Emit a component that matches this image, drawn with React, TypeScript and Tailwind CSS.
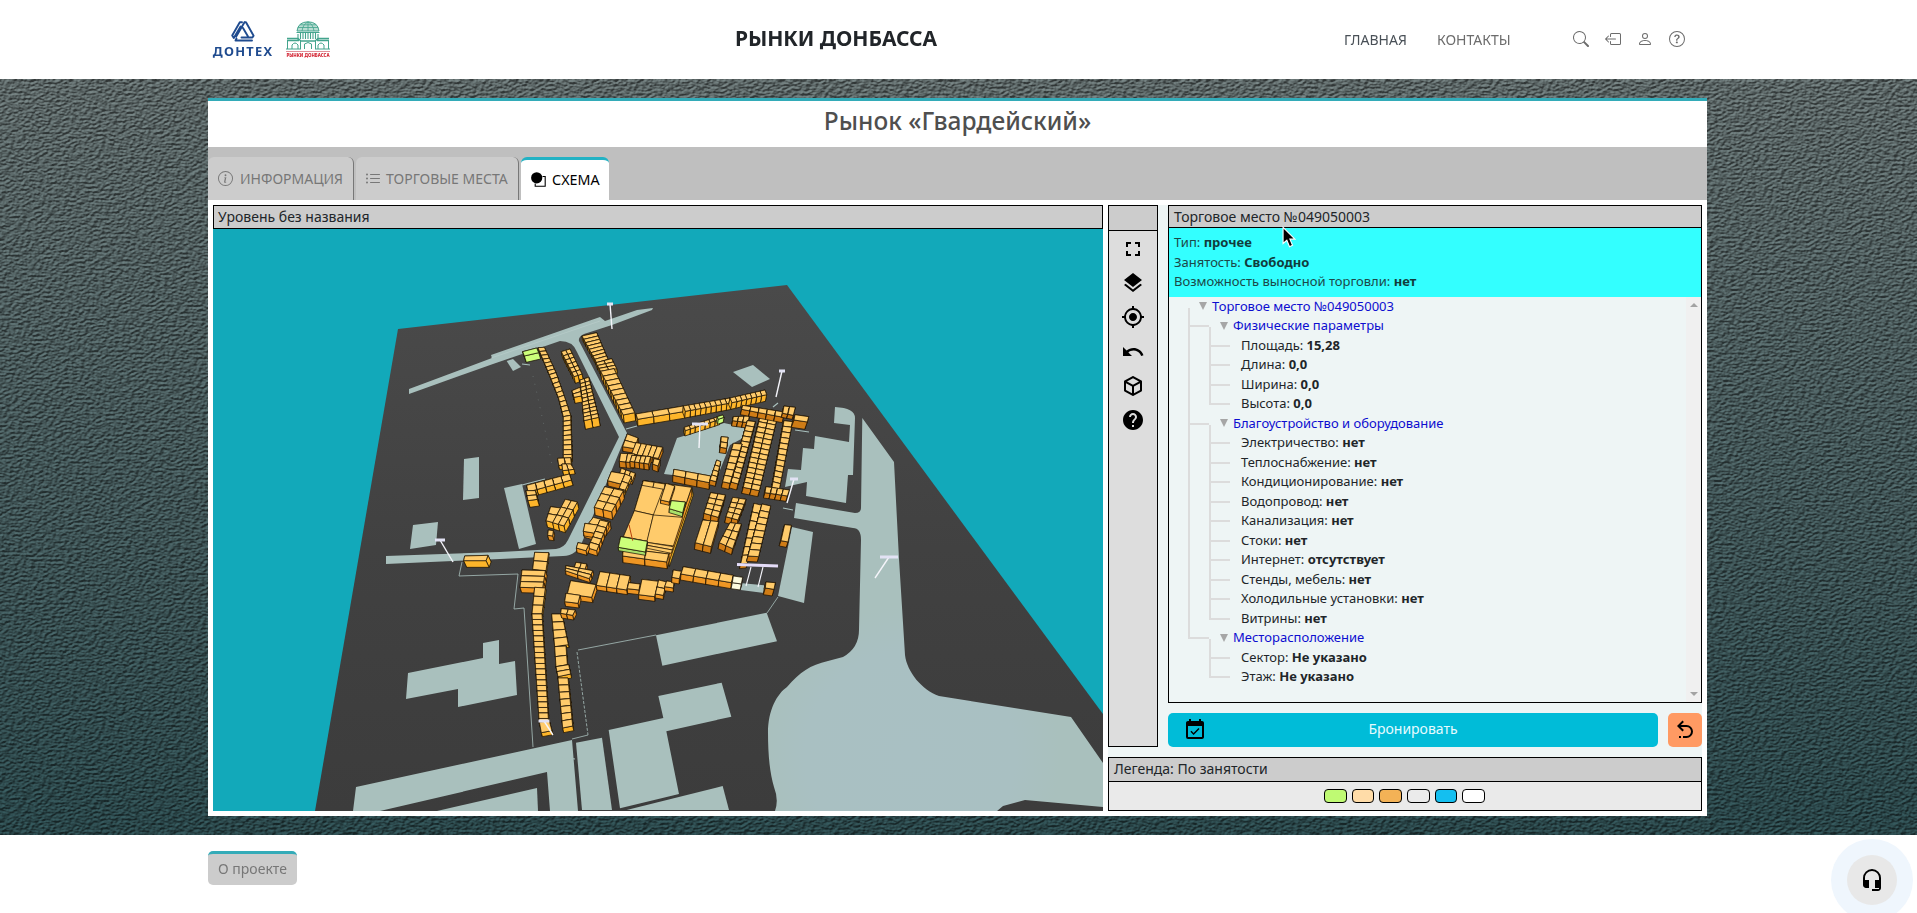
import React from "react";
import { BsSearch, BsBoxArrowLeft, BsPerson, BsQuestionCircle, BsInfoCircle, BsListUl } from "react-icons/bs";
import { MdFullscreen, MdLayers, MdMyLocation, MdUndo, MdHelp, MdEventAvailable, MdHeadsetMic } from "react-icons/md";

type Block = {
  q: number[];
  n?: number;
  m?: number;
  h?: number;
  side?: string;
  top?: string;
};

const BRIGHT = "#fdb52a";
const MID = "#ee9624";
const DARK = "#cf7c16";

/* Upper part of the market. Quads run start-left, end-left, end-right, start-right. */
const upper: Block[] = [
  { q: [68, 155, 73, 168, 116, 158, 110, 144], h: 19, side: "#ccff7a", top: "#ccff7a" },
  { q: [114, 143, 148, 224, 168, 218, 133, 142], n: 7, h: 6 },
  { q: [148, 224, 175, 292, 192, 286, 168, 218], n: 5, h: 6 },
  { q: [175, 292, 190, 350, 212, 346, 192, 286], n: 4, h: 6 },
  { q: [190, 350, 190, 478, 216, 478, 212, 346], n: 9, h: 6 },
  { q: [173, 475, 176, 496, 214, 494, 212, 473], m: 2, h: 12 },
  { q: [186, 492, 188, 512, 222, 508, 212, 492], m: 2, h: 14 },
  { q: [80, 556, 84, 576, 214, 540, 208, 522], m: 5, h: 16 },
  { q: [78, 572, 84, 602, 112, 598, 106, 572], n: 2, h: 20 },
  { q: [184, 155, 222, 230, 246, 222, 210, 147], n: 6, m: 2, h: 20 },
  { q: [240, 240, 252, 362, 296, 352, 266, 232], n: 11, m: 2, h: 26 },
  { q: [216, 272, 222, 292, 244, 288, 240, 262], n: 2, h: 18 },
  { q: [246, 108, 290, 188, 324, 178, 290, 98], n: 8, h: 14 },
  { q: [288, 188, 302, 214, 350, 206, 335, 176], n: 3, m: 2, h: 14 },
  { q: [302, 214, 370, 345, 404, 338, 342, 206], n: 9, h: 24 },
  { q: [408, 342, 413, 358, 556, 334, 550, 318], m: 3, h: 20 },
  { q: [550, 318, 556, 334, 696, 308, 690, 294], m: 9, h: 20 },
  { q: [690, 294, 696, 308, 800, 284, 795, 270], m: 7, h: 20 },
  { q: [553, 382, 556, 392, 660, 358, 655, 350], m: 7, h: 16 },
  { q: [652, 350, 655, 358, 672, 352, 668, 345], h: 15, side: "#ccff7a", top: "#ccff7a" },
  { q: [382, 402, 368, 440, 404, 446, 414, 414], n: 2, h: 14, side: DARK },
  { q: [408, 428, 395, 462, 475, 475, 488, 442], m: 5, h: 16, side: DARK },
  { q: [362, 460, 358, 484, 398, 488, 404, 462], m: 2, h: 18, side: DARK },
  { q: [396, 466, 390, 484, 446, 492, 452, 470], m: 4, h: 18, side: DARK },
  { q: [462, 476, 458, 492, 474, 498, 480, 480], h: 18, side: DARK },
  { q: [364, 505, 356, 530, 396, 545, 406, 520], m: 3, h: 8, side: MID },
  { q: [334, 515, 323, 542, 362, 552, 375, 522], h: 16, side: DARK },
  { q: [375, 522, 348, 588, 366, 592, 394, 530], n: 3, h: 10, side: BRIGHT },
  { q: [314, 560, 283, 622, 335, 635, 370, 572], n: 3, m: 2, h: 24, side: MID },
  { q: [280, 652, 250, 690, 300, 704, 330, 665], n: 2, m: 2, h: 22, side: MID },
  { q: [152, 620, 138, 662, 160, 668, 182, 624], n: 2, h: 20 },
  { q: [196, 598, 158, 668, 192, 678, 232, 606], n: 3, m: 2, h: 20 },
  { q: [145, 690, 143, 706, 158, 708, 160, 692], h: 14, side: MID },
  { q: [575, 562, 506, 768, 508, 800, 580, 585], top: "#fcc02c" },
  { q: [430, 542, 368, 754, 500, 782, 575, 562], h: 24, side: MID },
  { q: [430, 542, 403, 632, 460, 645, 495, 552] },
  { q: [403, 632, 370, 710, 442, 724, 460, 645] },
  { q: [460, 645, 440, 727, 520, 738, 548, 652] },
  { q: [498, 550, 482, 600, 508, 606, 524, 558], h: 10, side: MID },
  { q: [430, 542, 426, 556, 492, 568, 495, 552], m: 2 },
  { q: [440, 727, 437, 744, 514, 760, 520, 740], n: 2 },
  { q: [370, 745, 368, 768, 500, 786, 506, 762], m: 2, h: 20, side: MID },
  { q: [514, 602, 508, 626, 548, 638, 556, 606], h: 12, side: "#a8e06a", top: "#ccff7a" },
  { q: [362, 710, 355, 742, 436, 756, 442, 724], h: 10, side: "#a8e06a", top: "#ccff7a" },
  { q: [522, 508, 519, 526, 628, 548, 632, 528], m: 3, h: 20, side: DARK },
  { q: [650, 480, 630, 540, 648, 545, 662, 485], n: 4, h: 14, side: DARK },
  { q: [664, 410, 661, 442, 680, 445, 684, 412], n: 2, h: 16, side: DARK },
  { q: [700, 350, 698, 362, 744, 368, 748, 348], m: 3, h: 16, side: DARK },
  { q: [742, 362, 690, 545, 714, 552, 766, 365], n: 12, h: 18, side: DARK },
  { q: [700, 430, 668, 545, 690, 550, 726, 432], n: 6, h: 18, side: DARK },
  { q: [780, 350, 730, 562, 778, 572, 830, 360], n: 14, m: 2, h: 18, side: DARK },
  { q: [852, 362, 816, 562, 838, 568, 878, 365], n: 12, h: 10, side: DARK },
  { q: [798, 560, 795, 578, 862, 588, 868, 570], m: 4, h: 16, side: DARK },
  { q: [728, 316, 725, 328, 850, 352, 852, 336], m: 5, h: 16, side: DARK },
  { q: [852, 318, 848, 340, 880, 346, 886, 322], m: 2, h: 12, side: DARK },
  { q: [885, 344, 882, 360, 922, 366, 926, 350], h: 22, side: DARK },
  { q: [632, 578, 612, 640, 655, 652, 676, 585], n: 4, m: 2, h: 18, side: DARK },
  { q: [608, 660, 586, 728, 634, 740, 656, 665], n: 1, m: 2, h: 20, side: DARK },
  { q: [698, 592, 678, 650, 714, 660, 738, 598], n: 4, m: 2, h: 18, side: DARK },
  { q: [690, 668, 658, 728, 698, 746, 724, 672], n: 3, m: 2, h: 18, side: DARK },
  { q: [762, 610, 722, 792, 742, 790, 786, 616], n: 7, h: 14, side: DARK },
  { q: [786, 612, 744, 768, 776, 770, 812, 618], n: 8, h: 16, side: DARK },
  { q: [854, 674, 843, 722, 864, 726, 874, 676], h: 16, side: DARK },
];

/* Lower part of the market. */
const lower: Block[] = [
  { q: [255, 10, 250, 34, 286, 40, 298, 16], h: 14, side: MID },
  { q: [300, 0, 264, 84, 290, 92, 325, 6], n: 5, h: 16, side: MID },
  { q: [234, 68, 229, 84, 258, 92, 266, 74], h: 14, side: MID },
  { q: [104, 97, 98, 148, 138, 152, 146, 98], n: 2, h: 6, side: BRIGHT },
  { q: [66, 150, 60, 202, 128, 204, 136, 152], n: 3, h: 16, side: MID },
  { q: [104, 202, 96, 282, 126, 282, 136, 204], n: 3, h: 8, side: BRIGHT },
  { q: [96, 282, 118, 612, 146, 612, 126, 282], n: 20, h: 7, side: BRIGHT },
  { q: [118, 606, 124, 638, 156, 632, 148, 603], h: 12, side: BRIGHT },
  { q: [155, 282, 164, 380, 205, 374, 186, 282], n: 4, h: 8, side: BRIGHT },
  { q: [164, 380, 168, 440, 202, 434, 198, 378], n: 2, h: 8, side: BRIGHT },
  { q: [168, 440, 174, 470, 212, 462, 206, 434], n: 2, h: 12, side: BRIGHT },
  { q: [174, 474, 188, 624, 218, 618, 204, 474], n: 7, h: 14, side: BRIGHT },
  { q: [228, 127, 222, 145, 254, 152, 260, 132], m: 2, h: 10, side: MID },
  { q: [198, 137, 196, 152, 268, 176, 278, 152], n: 2, m: 2, h: 12, side: MID },
  { q: [212, 182, 202, 222, 275, 232, 288, 194], n: 1, h: 16, side: MID },
  { q: [198, 220, 194, 245, 234, 250, 240, 226], h: 14, side: MID },
  { q: [184, 266, 182, 280, 218, 286, 226, 270], m: 2, h: 14, side: MID },
  { q: [300, 155, 289, 196, 380, 210, 390, 168], m: 3, h: 14, side: MID },
  { q: [386, 188, 382, 206, 417, 210, 420, 192], h: 14, side: MID },
  { q: [426, 178, 416, 224, 464, 230, 476, 184], h: 14, side: MID },
  { q: [476, 180, 466, 222, 490, 226, 500, 186], n: 2, h: 12, side: MID },
  { q: [500, 183, 494, 200, 520, 204, 522, 186], h: 12, side: MID },
  { q: [520, 150, 516, 172, 538, 176, 544, 154], h: 16, side: MID },
  { q: [550, 140, 543, 162, 694, 188, 700, 166], m: 4, h: 18, side: MID },
  { q: [700, 168, 697, 188, 724, 192, 728, 172], h: 18, side: "#fdfbe0", top: "#fdfbe0" },
  { q: [798, 186, 796, 204, 822, 208, 826, 188], h: 20, side: DARK },
  { q: [-106, 108, -109, 122, -42, 122, -36, 106], h: 20 },
];

type Cell = { c: number[][]; cy: number; h: number; side: string; top: string };

const toCells = (b: Block, vx: number): { cells: Cell[]; ex: number } => {
  const { q, n = 1, m = 1, h = 0, side = BRIGHT, top = "#ffcb6b" } = b;
  const at = (u: number, v: number) => [
    (q[0] * (1 - u) + q[2] * u) * (1 - v) + (q[6] * (1 - u) + q[4] * u) * v,
    (q[1] * (1 - u) + q[3] * u) * (1 - v) + (q[7] * (1 - u) + q[5] * u) * v,
  ];
  const cells: Cell[] = [];
  for (let i = 0; i < n; i++)
    for (let j = 0; j < m; j++) {
      const c = [at(i / n, j / m), at((i + 1) / n, j / m), at((i + 1) / n, (j + 1) / m), at(i / n, (j + 1) / m)];
      cells.push({ c, cy: (c[0][1] + c[2][1]) / 2, h, side, top });
    }
  cells.sort((a, z) => a.cy - z.cy);
  return { cells, ex: ((vx - q[0]) * h) / 400 / 3 };
};

const pts = (p: number[][]) => p.map((a) => a.map((v) => v.toFixed(1)).join(",")).join(" ");

function Blocks({ list, vx }: { list: Block[]; vx: number }) {
  return (
    <g stroke="#1c1204" strokeWidth="2.2" strokeLinejoin="round">
      {list.map((b, k) => {
        const { cells, ex } = toCells(b, vx);
        return (
          <g key={k}>
            {cells.map((cell, i) => (
              <g key={i}>
                {cell.h > 0 &&
                  [3, 0, 2, 1].map((e) => {
                    const p = cell.c[e];
                    const r = cell.c[(e + 1) % 4];
                    return (
                      <polygon
                        key={e}
                        fill={cell.side}
                        points={pts([p, r, [r[0] + ex, r[1] + cell.h], [p[0] + ex, p[1] + cell.h]])}
                      />
                    );
                  })}
                <polygon fill={cell.top} points={pts(cell.c)} />
              </g>
            ))}
          </g>
        );
      })}
    </g>
  );
}

const lamps = [
  [610, 304, 612, 329, 6],
  [782, 371, 776, 397, 6],
  [700, 424, 699, 448, 16],
  [440, 540, 453, 562, 10],
  [889, 557, 875, 578, 18],
  [794, 479, 787, 503, 8],
  [544, 721, 553, 735, 11],
];

function MarketMap() {
  return (
    <svg viewBox="213 229 890 582" className="block h-[582px] w-[890px] bg-[#12a9ba]">
      <defs>
        <linearGradient id="ground" x1="0" y1="0" x2="0" y2="1">
          <stop offset="0" stopColor="#4a4a4a" />
          <stop offset="0.5" stopColor="#414141" />
          <stop offset="1" stopColor="#3c3c3c" />
        </linearGradient>
        <radialGradient id="plaza" gradientUnits="userSpaceOnUse" cx="910" cy="755" r="150">
          <stop offset="0" stopColor="#a9c0c3" />
          <stop offset="0.7" stopColor="#a9c0c2" />
          <stop offset="1" stopColor="#a9c0bd" />
        </radialGradient>
      </defs>
      <polygon points="398,329 787,285 1103,714 1103,811 315,811" fill="url(#ground)" />
      <g fill="#a9c0bd">
        <path d="M409 389L492 358L491 355L600 317L605 321L637 310L653 308L652 310L612 325L584 334Q578 337 579 341L627 433L583 540Q577 556 563 556L500 559L386 564V556L500 552L556 549Q564 548 568 540L619 437L577 352Q573 341 560 341L493 364L409 394Z" />
        <path d="M862.3 418L894 462L899 559L905 655C907 672 922 690 939 696L1071 717L1103 763V807L1025 800L1003 806L997 811H775Q779 800 774 787Q768 767 768 733C768 710 777 694 787 687C800 672 810 665 828 661L843 657Q859 648 859 630L861 540Q861 528 853 528L794 518L796 503L855 513Q861 513 861 508Z" fill="url(#plaza)" />
        <path d="M835 407Q855 408 855 418L853 475L848 475L846 503L806 496L807 482L785 487L788 469L801 470L803 448L814 449L815 436L849 442L850 425L834 423Z" />
        <polygon points="792,527 813,532 804,603 778,596" />
        <polygon points="506.700,361 513,359 521,367 513,371" />
        <polygon points="464,459 479,457 479,498 463,500" />
        <polygon points="504,488 522,484 536,544 519,549" />
        <polygon points="413,525 438,522 436,545 410,549" />
        <polygon points="733,372 753,365 770,379 752,387" />
        <polygon points="664,474 677,438 700,431 724,423 747,428 745,437 730,445 716,480" />
        <polygon points="356,787 572,740 578,811 550,811 547,772 380,811 353,811" />
        <polygon points="437,811 537,788 538,811" />
        <polygon points="408,673 483,658 483,643 499,640 499,664 515,661 517,695 458,707 458,689 406,699" />
        <g transform="translate(500 520) scale(0.33333)">
          <polygon points="468,346 800,278 831,364 487,437" />
          <polygon points="475,528 665,488 694,590 499,634 537,822 360,865 326,630 490,594" />
          <polygon points="228,668 306,653 336,870 246,870" />
          <polygon points="380,870 668,798 687,870" />
          <polygon points="728,190 792,196 798,220 722,210" />
        </g>
      </g>
      <g fill="none" stroke="#a9c0bd" strokeWidth="0.8">
        <path d="M462 562L459 576L518 574L514 609L524 608L533 747M578 650L656 635M767 613L778 597M572 739L588 735" />
        <path d="M577 652L588 735" strokeDasharray="3 1.5" />
        <path d="M533 376L545 430L553 470" strokeDasharray="1 7" opacity="0.35" />
        <path d="M522 364L530 365M522 485L545 479M626 429L637 426M795 430L809 432M783 508L793 510M773 407L778 403M560 757L575 759" strokeWidth="1.2" />
        <path d="M491 358L600 321" stroke="#bccfcd" strokeWidth="0.6" />
      </g>
      <g transform="translate(500 300) scale(0.33333)">
        <Blocks list={upper} vx={450} />
        <path d="M387 674L398 722" stroke="#b8400c" strokeWidth="3" />
      </g>
      <g transform="translate(500 520) scale(0.33333)">
        <Blocks list={lower} vx={450} />
      </g>
      <g stroke="#f4f4fa">
        {lamps.map(([x, y, bx, by, w], i) => (
          <g key={i}>
            <path d={`M${x} ${y}L${bx} ${by}`} strokeWidth="1.4" />
            <path d={`M${x - w / 2} ${y}h${w}`} strokeWidth="3" stroke="#e2e2f4" />
          </g>
        ))}
        <path d="M751 567L746 586M763 567L758 587" strokeWidth="1.1" />
        <path d="M737 564.500L778 566" strokeWidth="3" stroke="#e4dcf8" />
      </g>
    </svg>
  );
}

type Gut = "none" | "start" | "line" | "tee" | "end";

function Gutter({ kind }: { kind: Gut }) {
  const up = kind === "line" || kind === "tee" || kind === "end";
  const arm = kind === "tee" || kind === "end";
  const down = kind === "start" || kind === "line" || kind === "tee";
  return (
    <span className="flex h-full w-[21px] shrink-0 flex-col">
      <span className={`h-[11px] border-[#dcdcdc] ${up ? "border-l-2" : ""} ${arm ? "border-b-2" : ""}`} />
      <span className={`flex-1 border-[#dcdcdc] ${down ? "border-l-2" : ""}`} />
    </span>
  );
}

type Group = { name: string; items: [string, string][] };

const groups: Group[] = [
  { name: "Физические параметры", items: [["Площадь", "15,28"], ["Длина", "0,0"], ["Ширина", "0,0"], ["Высота", "0,0"]] },
  {
    name: "Благоустройство и оборудование",
    items: [
      ["Электричество", "нет"], ["Теплоснабжение", "нет"], ["Кондиционирование", "нет"], ["Водопровод", "нет"],
      ["Канализация", "нет"], ["Стоки", "нет"], ["Интернет", "отсутствует"], ["Стенды, мебель", "нет"],
      ["Холодильные установки", "нет"], ["Витрины", "нет"],
    ],
  },
  { name: "Месторасположение", items: [["Сектор", "Не указано"], ["Этаж", "Не указано"]] },
];

function Arrow() {
  return (
    <svg viewBox="0 0 8 8" className="mr-[5px] size-2 shrink-0 fill-[#a6a6a6]">
      <path d="M0 0H8L4 8Z" />
    </svg>
  );
}

function Tree() {
  return (
    <div className="flex-1 pl-[19px] text-[13px] leading-[19.5px] text-[#212529]">
      <div className="flex h-[19.5px] items-center">
        <Gutter kind="start" />
        <span className="-ml-[10px] flex items-center text-[#0d0dd0]"><Arrow />Торговое место №049050003</span>
      </div>
      {groups.map((g, gi) => {
        const last = gi === groups.length - 1;
        return (
          <React.Fragment key={g.name}>
            <div className="flex h-[19.5px] items-center">
              <Gutter kind={last ? "end" : "tee"} />
              <Gutter kind="start" />
              <span className="-ml-[10px] flex items-center text-[#0d0dd0]"><Arrow />{g.name}</span>
            </div>
            {g.items.map(([k, v], i) => (
              <div key={k} className="flex h-[19.5px] items-center">
                <Gutter kind={last ? "none" : "line"} />
                <Gutter kind={i === g.items.length - 1 ? "end" : "tee"} />
                <span className="pl-[11px] whitespace-pre">{k}: <b>{v}</b></span>
              </div>
            ))}
          </React.Fragment>
        );
      })}
    </div>
  );
}

function CubeIcon() {
  return (
    <svg viewBox="0 0 24 24" className="size-6 fill-black">
      <path d="M21,16.5C21,16.88 20.79,17.21 20.47,17.38L12.57,21.82C12.41,21.94 12.21,22 12,22C11.79,22 11.59,21.94 11.43,21.82L3.53,17.38C3.21,17.21 3,16.88 3,16.5V7.5C3,7.12 3.21,6.79 3.53,6.62L11.43,2.18C11.59,2.06 11.79,2 12,2C12.21,2 12.41,2.06 12.57,2.18L20.47,6.62C20.79,6.79 21,7.12 21,7.5V16.5M12,4.15L6.04,7.5L12,10.85L17.96,7.5L12,4.15M5,15.91L11,19.29V12.58L5,9.21V15.91M19,15.91V9.21L13,12.58V19.29L19,15.91Z" />
    </svg>
  );
}

function DontehLogo() {
  return (
    <div className="flex w-[60px] flex-col items-center text-[#1f4b8f]">
      <svg viewBox="0 0 24 21" className="h-[21px] w-6" fill="none" stroke="currentColor" strokeWidth="2" strokeLinejoin="round" strokeLinecap="round">
        <path d="M11 1.300H8.800L1.200 14.500L2.800 17L9.600 5.500M13.500 1.300H15L22.600 14.800L21.400 16.500H10.500M13.500 1.300L5.200 15.500M12 7L17 15.500M21 19.500H4.500L5.500 17.500" strokeWidth="1.900" />
      </svg>
      <span className="mt-[2px] text-[12.800px] leading-[15px] font-bold tracking-[1.300px]">ДОНТЕХ</span>
    </div>
  );
}

function MarketsLogo() {
  return (
    <div className="flex w-11 flex-col items-center">
      <svg viewBox="0 0 44 29" className="h-[29px] w-11" fill="none" stroke="#43a48d" strokeWidth="1">
        <path d="M11 10Q12 1 22 0.800Q32 1 33 10Z" fill="#b9ddd3" />
        <path d="M16 10Q17 3 22 1Q27 3 28 10M22 1V10M12 6.500H32M14 3.800H30" strokeWidth="0.800" />
        <path d="M10.500 11.500H33.500M12 13V19M14.500 12V18M17 12V18M19.500 12V18M22 12V18M24.500 12V18M27 12V18M29.500 12V18M32 13V19" strokeWidth="1.100" />
        <path d="M1 17.500H12L15 20H29L32 17.500H43M1 19.500H13M31 19.500H43" strokeWidth="1.400" />
        <path d="M1.500 20V28M6 28V24Q9 20 12 24V28M14.500 20V28M18.500 28V23Q22 20 25.500 23V28M29.500 20V28M32 28V24Q35 20 38 24V28M42.500 20V28M0 28H15M29 28H44" />
      </svg>
      <span className="mt-[1px] border-t border-[#e08f98] text-[4.450px] leading-[6px] font-extrabold whitespace-nowrap text-[#d3202f]">РЫНКИ ДОНБАССА</span>
    </div>
  );
}

const swatches = ["bg-[#bffa73]", "bg-[#ffdca8]", "bg-[#f3b256]", "bg-[#ebebeb]", "bg-[#14bff0]", "bg-white"];

export default function App() {
  return (
    <div className="relative flex h-[913px] w-[1917px] flex-col overflow-hidden bg-white font-['Noto_Sans',sans-serif] text-[#212529]">
      <header className="flex h-[79px] shrink-0 items-center bg-white pl-[213px]">
        <DontehLogo />
        <div className="ml-[13px]"><MarketsLogo /></div>
        <h1 className="ml-[403px] w-[206px] pb-[1px] text-center text-[21px] font-bold tracking-[-0.050px] whitespace-nowrap">РЫНКИ ДОНБАССА</h1>
        <nav className="ml-[405px] flex gap-[31px] text-[14px] whitespace-nowrap">
          <a className="w-[62px] text-[#495057]">ГЛАВНАЯ</a>
          <a className="w-[74px] text-[#6c6c6c]">КОНТАКТЫ</a>
        </nav>
        <div className="ml-[62px] flex gap-4 pb-[1px] text-[#6c6c6c]">
          <BsSearch size={16} /><BsBoxArrowLeft size={16} /><BsPerson size={16} /><BsQuestionCircle size={16} />
        </div>
      </header>

      <main className="relative h-[756px] shrink-0 bg-linear-to-b from-[#586262] to-[#274245] pt-[19px] pl-[208px]">
        <svg className="absolute inset-0 h-full w-full opacity-45 mix-blend-overlay">
          <filter id="leather" x="0" y="0" width="100%" height="100%" colorInterpolationFilters="sRGB">
            <feTurbulence type="fractalNoise" baseFrequency="0.24 0.44" numOctaves="3" seed="7" result="n" />
            <feDiffuseLighting in="n" surfaceScale="2.200" lightingColor="#ffffff">
              <feDistantLight azimuth="60" elevation="32" />
            </feDiffuseLighting>
          </filter>
          <rect width="100%" height="100%" filter="url(#leather)" />
        </svg>
        <section className="relative flex h-[718px] w-[1499px] flex-col border-t-[3px] border-[#33abb8] bg-white">
          <h2 className="h-[46px] shrink-0 text-center text-[24.500px] leading-[40px] font-medium text-[#4f4f4f]">Рынок «Гвардейский»</h2>
          <div className="flex h-[53px] shrink-0 items-end gap-[2px] bg-[#bfbfbf] text-[14px]">
            <div className="flex h-[43px] w-[146px] items-center rounded-t-md border-r border-[#777] bg-[#ccc] pl-[10px] whitespace-nowrap text-[#777]">
              <BsInfoCircle size={15} className="mr-[7px]" />ИНФОРМАЦИЯ
            </div>
            <div className="flex h-[43px] w-[163px] items-center rounded-t-md border-r border-[#777] bg-[#ccc] pl-[9px] whitespace-nowrap text-[#777]">
              <BsListUl size={16} className="mr-[5px]" />ТОРГОВЫЕ МЕСТА
            </div>
            <div className="flex h-[43px] w-[88px] items-center rounded-t-md border-t-[3px] border-[#22b2c4] bg-white pl-[10px] text-[14.300px] whitespace-nowrap text-black">
              <svg viewBox="0 0 16 16" className="mr-[5px] size-4">
                <circle cx="5.700" cy="5.800" r="5.600" />
                <path d="M11.500 4.500H14.200V14.200H4.200V11.500" fill="none" stroke="#000" strokeWidth="1.100" />
              </svg>
              СХЕМА
            </div>
          </div>

          <div className="flex flex-1 px-[5px] pt-[5px] pb-[5px]">
            <div className="flex w-[890px] flex-col">
              <div className="h-6 border border-black bg-[#ccc] pl-[4px] text-[14px] leading-[22px]">Уровень без названия</div>
              <MarketMap />
            </div>
            <div className="ml-[5px] flex w-[594px] flex-col bg-[#eef5f5]">
              <div className="flex h-[542px]">
                <div className="flex w-[50px] flex-col items-center border border-black bg-[#ddd] text-black">
                  <div className="h-[25px] w-full border-b border-black bg-[#ccc]" />
                  <div className="flex flex-col gap-[10.200px] pt-[6px]">
                    <MdFullscreen size={24} /><MdLayers size={24} /><MdMyLocation size={24} /><MdUndo size={24} /><CubeIcon /><MdHelp size={24} />
                  </div>
                </div>
                <div className="ml-[10px] flex w-[534px] flex-col">
                  <div className="flex h-[498px] flex-col border border-black">
                    <div className="h-[22px] shrink-0 border-b border-black bg-[#ccc] pl-[5px] text-[14px] leading-[22px]">Торговое место №049050003</div>
                    <div className="h-[69px] shrink-0 bg-[#33ffff] pt-[5px] pl-[5px] text-[13px] leading-[19.500px] text-[#1c4848]">
                      <p>Тип: <b className="text-[#113c3c]">прочее</b></p>
                      <p>Занятость: <b className="text-[#113c3c]">Свободно</b></p>
                      <p>Возможность выносной торговли: <b className="text-[#113c3c]">нет</b></p>
                    </div>
                    <div className="-mt-[0.500px] flex flex-1">
                      <Tree />
                      <div className="flex w-[15px] flex-col items-center justify-between bg-[#f0f0f0] pt-[6px] pb-[6px]">
                        <svg viewBox="0 0 8 4" className="h-1 w-2 fill-[#a3a3a3]"><path d="M0 4L4 0L8 4Z" /></svg>
                        <svg viewBox="0 0 8 4" className="h-1 w-2 fill-[#a3a3a3]"><path d="M0 0H8L4 4Z" /></svg>
                      </div>
                    </div>
                  </div>
                  <div className="mt-[10px] flex h-[34px] gap-[10px]">
                    <button className="grid w-[490px] grid-cols-[1fr_auto_1fr] items-center rounded-[5px] bg-[#00bcd8] pl-[15px] text-[14px] text-[#e6fbff]">
                      <MdEventAvailable size={24} className="text-black" />
                      <span className="pr-[15px] pb-[3px]">Бронировать</span>
                    </button>
                    <button className="flex w-[34px] items-center justify-center rounded-[5px] bg-[#ff9a63]">
                      <svg viewBox="0 0 24 24" className="size-6 fill-black">
                        <path d="M13.5,7A6.5,6.5 0 0,1 20,13.5A6.5,6.5 0 0,1 13.5,20H10V18H13.5C16,18 18,16 18,13.5C18,11 16,9 13.5,9H7.83L10.91,12.09L9.5,13.5L4,8L9.5,2.5L10.92,3.91L7.83,7H13.5M6,18H8V20H6V18Z" />
                      </svg>
                    </button>
                  </div>
                </div>
              </div>
              <div className="mt-[10px] flex h-[54px] flex-col border border-black bg-[#eaeaea]">
                <div className="h-6 border-b border-black bg-[#ccc] pl-[5px] text-[14px] leading-[22px]">Легенда: По занятости</div>
                <div className="flex flex-1 items-center justify-center gap-[5px] pr-[1px]">
                  {swatches.map((c) => (
                    <span key={c} className={`h-[14px] w-[22.600px] rounded-[4px] border border-black ${c}`} />
                  ))}
                </div>
              </div>
            </div>
          </div>
        </section>
      </main>

      <footer className="flex-1 bg-white pt-4 pl-[208px]">
        <div className="flex h-[34px] w-[89px] items-center justify-center rounded-[5px] border-t-[3px] border-[#33abb8] bg-[#ccc] pb-[2px] text-[14px] whitespace-nowrap text-[#777]">О проекте</div>
      </footer>

      <div className="absolute top-[839px] left-[1831px] flex size-[82px] items-center justify-center rounded-full bg-[#eff6fd]">
        <div className="flex size-[50px] items-center justify-center rounded-full bg-[#e8e8e8] text-black"><MdHeadsetMic size={24} /></div>
      </div>
      <svg viewBox="0 0 13 20" className="absolute top-[226px] left-[1282px] h-[22px] w-[14px]">
        <path d="M1 1V16L4.500 13L7 19L9.800 17.700L7.300 12H12Z" fill="#000" stroke="#fff" strokeWidth="1" />
      </svg>
    </div>
  );
}
